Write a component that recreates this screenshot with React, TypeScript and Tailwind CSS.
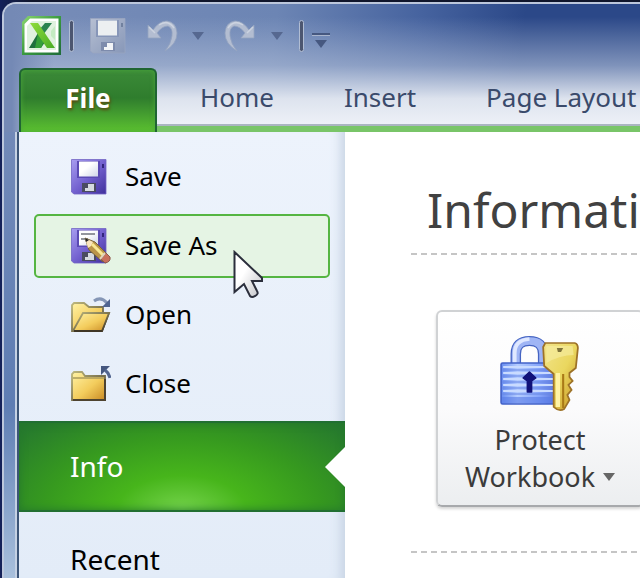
import React from "react";

function ExcelLogo() {
  return (
    <svg width="40" height="40" viewBox="0 0 40 40" aria-hidden="true">
      <defs>
        <linearGradient id="logoEdge" x1="0" y1="0" x2="1" y2="1">
          <stop offset="0" stopColor="#8bd670" />
          <stop offset="0.5" stopColor="#3a9a3f" />
          <stop offset="1" stopColor="#1f6b3a" />
        </linearGradient>
        <linearGradient id="logoX" x1="0" y1="0" x2="1" y2="1">
          <stop offset="0" stopColor="#8fdc3c" />
          <stop offset="1" stopColor="#4aac25" />
        </linearGradient>
      </defs>
      <path d="M7 0H40V39H1V6Z" fill="url(#logoEdge)" />
      <path d="M9 2.5H37.5V36.5H3.5V8Z" fill="#fff" />
      <path d="M11 5H35V34H6V10Z" fill="#e0f2df" />
      <path d="M31 7H24L18 14L22 19Z" fill="#2b8450" />
      <path d="M30 15L34 10V24L30 20Z" fill="#c4ebc2" />
      <path d="M17 17L24 26L20 32H8Z" fill="#1f703e" />
      <path d="M17 17L23 25L20 32H14Z" fill="#35a03a" />
      <path d="M9 7H17L34 32H26Z" fill="url(#logoX)" />
    </svg>
  );
}

function Floppy({ muted = false, pencil = false }: { muted?: boolean; pencil?: boolean }) {
  const body = muted ? "url(#floppyGrey)" : "url(#floppyBlue)";
  return (
    <svg width="40" height="36" viewBox="0 0 40 36" aria-hidden="true">
      <defs>
        <linearGradient id="floppyGrey" x1="0" y1="0" x2="1" y2="1">
          <stop offset="0" stopColor="#b6bfd2" />
          <stop offset="1" stopColor="#8797b8" />
        </linearGradient>
        <linearGradient id="floppyBlue" x1="0" y1="0" x2="1" y2="1">
          <stop offset="0" stopColor="#a79df0" />
          <stop offset="0.5" stopColor="#7462d0" />
          <stop offset="1" stopColor="#40309c" />
        </linearGradient>
        <linearGradient id="floppyLabel" x1="0" y1="0" x2="1" y2="1">
          <stop offset="0.4" stopColor="#fff" />
          <stop offset="1" stopColor="#cfd6e8" />
        </linearGradient>
      </defs>
      <path d="M0.500 0.500H35V35H3L0.500 33Z" fill={body} stroke={muted ? "#9aa6c0" : "#7466c4"} strokeWidth="0.8" />
      <path d="M6 2H29V19H6Z" fill={muted ? "#8796b8" : "#5a4ab4"} />
      <path d="M8 2.500H27V17.500H8Z" fill={muted ? "#eceff1" : "url(#floppyLabel)"} />
      <path d="M31 5H33V9H31Z" fill={muted ? "#71819f" : "#33267d"} />
      <path d="M11 24H25V33H11Z" fill={muted ? "#7d8bac" : "#4a4b60"} />
      <path d="M17 25H23V32H14V29H17Z" fill={muted ? "#f2f4f7" : "#d6dae0"} />
      {pencil && (
        <g>
          <path d="M10 6H24M10 11H17" stroke="#70747e" strokeWidth="1.6" />
          <path d="M14 10L24 14L38 28L32 34L18 22Z" fill="#ba9448" stroke="#77643b" />
          <path d="M14 10L17 20L20 18L22 14Z" fill="#fae6bd" />
          <path d="M14 10L15 14L18 12Z" fill="#222" />
          <path d="M21 16L34 29" stroke="#f8e891" strokeWidth="3" />
          <path d="M35 25L39 29Q40 34 34 35L30 31Z" fill="#c8705c" stroke="#8c584b" />
          <path d="M34 25L29 31" stroke="#e1d3bc" strokeWidth="2" />
        </g>
      )}
    </svg>
  );
}

function UndoIcon({ flip = false }: { flip?: boolean }) {
  return (
    <svg width="31" height="33" viewBox="0 0 31 33" aria-hidden="true" className={flip ? "-scale-x-100" : ""}>
      <path
        d="M1 5V18H14L10 13Q15 6 21 6Q26 8 25 16Q24 24 18 31Q30 24 30 13Q29 2 20 1Q12 1 6 10Z"
        fill="#b3bdd1"
        stroke="#96a4c0"
        strokeWidth="0.8"
      />
      <path d="M2 7L8 13M12 5Q21 -1 27 8" stroke="#ccd3e0" strokeWidth="1.5" fill="none" />
    </svg>
  );
}

function Caret({ className = "" }: { className?: string }) {
  return (
    <svg width="12" height="8" viewBox="0 0 12 8" className={className} aria-hidden="true">
      <path d="M0 0H12L6 8Z" fill="currentColor" />
    </svg>
  );
}

function Divider() {
  return <span className="h-8 w-[5px] rounded-sm border border-[#b1bdd3] bg-[#4c5670]" />;
}

function FolderDefs() {
  return (
    <defs>
      <linearGradient id="folder" x1="0" y1="0" x2="1" y2="1">
        <stop offset="0" stopColor="#fff3a6" />
        <stop offset="0.55" stopColor="#f3cc5c" />
        <stop offset="1" stopColor="#c98a24" />
      </linearGradient>
      <linearGradient id="folderEdge" x1="0" y1="0" x2="1" y2="1">
        <stop offset="0" stopColor="#bdb77d" />
        <stop offset="1" stopColor="#3d3324" />
      </linearGradient>
    </defs>
  );
}

function OpenIcon() {
  return (
    <svg width="40" height="36" viewBox="0 0 40 36" aria-hidden="true">
      <FolderDefs />
      <path d="M1 34V8L3 6H13L18 10H32V16H38L31 34Z" fill="url(#folder)" stroke="url(#folderEdge)" strokeWidth="1.8" />
      <path d="M3 32L12 16H38L31 34H2Z" fill="url(#folder)" stroke="url(#folderEdge)" strokeWidth="1.8" />
      <path d="M3 34H31" stroke="#3f3625" strokeWidth="2" />
      <path d="M23 4Q30 -1 36 6" fill="none" stroke="#8596b6" strokeWidth="3" />
      <path d="M39 2V10H31Z" fill="#506591" />
    </svg>
  );
}

function CloseIcon() {
  return (
    <svg width="40" height="36" viewBox="0 0 40 36" aria-hidden="true">
      <path d="M1 34V8L3 6H11L14 10H34V34Z" fill="url(#folder)" stroke="url(#folderEdge)" strokeWidth="1.8" />
      <path d="M2 12H33" stroke="#aa9b5b" strokeWidth="1.5" />
      <path d="M34 13V34H2" fill="none" stroke="#4e4330" strokeWidth="2" />
      <path d="M30 0H39L30 9Z" fill="#45577f" />
      <path d="M34 4Q38 7 39 12" fill="none" stroke="#53668f" strokeWidth="3" />
    </svg>
  );
}

function LockIcon() {
  return (
    <svg width="80" height="78" viewBox="0 0 76 78" preserveAspectRatio="none" aria-hidden="true">
      <defs>
        <linearGradient id="lockBody" x1="0" y1="0" x2="1" y2="0">
          <stop offset="0" stopColor="#668cf0" />
          <stop offset="0.3" stopColor="#b5cdff" />
          <stop offset="0.7" stopColor="#85a4fa" />
          <stop offset="1" stopColor="#5874dc" />
        </linearGradient>
        <linearGradient id="keyFill" x1="0" y1="0" x2="1" y2="1">
          <stop offset="0" stopColor="#f2e48b" />
          <stop offset="0.5" stopColor="#ead75f" />
          <stop offset="1" stopColor="#c5901d" />
        </linearGradient>
      </defs>
      <path d="M15 30V20Q15 7 28 7Q41 7 41 20V30" fill="none" stroke="#4564c2" strokeWidth="10" />
      <path d="M15 30V20Q15 7 28 7Q41 7 41 20V30" fill="none" stroke="#9fb5f5" strokeWidth="7.500" />
      <path d="M14 29V19Q14 6 28 5" fill="none" stroke="#dfe8ff" strokeWidth="3.500" />
      <rect x="1" y="29" width="52" height="41" rx="1.500" fill="url(#lockBody)" stroke="#4261c8" strokeWidth="1.500" />
      <path d="M3 33H51M3 39H51M3 45H51M3 51H51M3 57H51" stroke="#c9dbff" strokeWidth="2" />
      <path d="M2 36H52M2 42H52M2 48H52M2 54H52M2 60H52" stroke="#6785e4" strokeWidth="1" />
      <path d="M2 63H52V69H2Z" fill="#587be6" opacity="0.6" />
      <path d="M28 38L34 44L30 47V58H26V47L22 44Z" fill="#11127a" stroke="#11127a" strokeWidth="1.500" strokeLinejoin="round" />
      <path
        d="M43 9H71Q74 10 74 14L72 34L66 39V43L69 47L65 51L68 56L64 61L66 66L61 75Q56 78 51 73V40L42 32L41 13Z"
        fill="url(#keyFill)"
        stroke="#9d7228"
        strokeWidth="1.700"
      />
      <path d="M44 12H69L70 21Q57 21 44 29Z" fill="#f6ec9f" opacity="0.65" />
      <path d="M55 39V73" stroke="#fff3a5" strokeWidth="4" />
      <path d="M60 40V74" stroke="#a97917" strokeWidth="2" />
      <path d="M54 14H60L58 18H55Z" fill="#80743a" />
    </svg>
  );
}

function Pointer() {
  return (
    <svg width="32" height="50" viewBox="0 0 32 50" className="absolute left-[197px] top-[34px]" aria-hidden="true">
      <defs>
        <linearGradient id="pointer" x1="0" y1="0" x2="1" y2="1">
          <stop offset="0.4" stopColor="#fff" />
          <stop offset="1" stopColor="#bfc0c5" />
        </linearGradient>
      </defs>
      <path
        d="M1.500 2V42L11 34L17 46Q19 48 22 46Q26 44 24 41L19 31H29V28Z"
        fill="url(#pointer)"
        stroke="#2b2e3c"
        strokeWidth="2"
      />
    </svg>
  );
}

const tabs = ["Home", "Insert", "Page Layout"];

const commands = [
  { label: "Save", icon: <Floppy /> },
  { label: "Save As", icon: <Floppy pencil />, active: true },
  { label: "Open", icon: <OpenIcon /> },
  { label: "Close", icon: <CloseIcon /> },
];

function QuickAccess() {
  return (
    <div className="flex h-16 items-center pl-[17px]">
      <ExcelLogo />
      <div className="ml-2 flex items-center">
        <Divider />
        <button aria-label="Save workbook" className="ml-4">
          <Floppy muted />
        </button>
        <button aria-label="Undo" className="ml-[17px]">
          <UndoIcon />
        </button>
        <button aria-label="Undo history" className="ml-[14px]">
          <Caret className="text-[#566890]" />
        </button>
        <button aria-label="Redo" className="ml-5">
          <UndoIcon flip />
        </button>
        <button aria-label="Redo history" className="mx-4">
          <Caret className="text-[#566890]" />
        </button>
        <Divider />
        <button aria-label="Customize toolbar" className="ml-2 mt-2 flex flex-col items-center gap-1 text-[#465880]">
          <span className="h-[3px] w-[18px] border-b border-[#a9b5cd] bg-[#465880]" />
          <Caret />
        </button>
      </div>
    </div>
  );
}

function Ribbon() {
  return (
    <nav className="flex h-16 items-stretch whitespace-nowrap pl-[15px] text-[26px] text-[#3a4a6b]">
      <button className="z-10 w-[138px] shrink-0 rounded-t-md border-2 border-b-0 border-[#1f6532] bg-linear-to-b from-[#3b8a38] via-[#2f7d2d] via-45% to-[#5cc22f] pb-[6px] font-bold text-white shadow-[inset_0_0_5px_#4ba63a] [text-shadow:1px_2px_3px_#5a4a10]">
        File
      </button>
      <div className="flex grow border-b-6 border-[#79c568] pl-2 shadow-[inset_0_-2px_0_#aab5c0]">
        {tabs.map((t) => (
          <button key={t} className="shrink-0 px-[35px]">
            {t}
          </button>
        ))}
      </div>
    </nav>
  );
}

function Sidebar() {
  return (
    <aside className="w-[326px] shrink-0 bg-linear-to-b from-[#edf3fc] to-[#e3ecf8] pt-[13px] text-black shadow-[inset_-14px_0_12px_-10px_#c6d3e3]">
      <div className="flex flex-col gap-[5px] px-[15px] pb-[5px]">
        {commands.map((c) => (
          <button
            key={c.label}
            className={
              c.active
                ? "relative flex h-16 items-center rounded-[5px] border-2 border-[#55b542] bg-[#e5f4e4] pl-[35px] text-[26px]"
                : "flex h-16 items-center rounded-[5px] border-2 border-transparent pl-[35px] text-[26px]"
            }
          >
            {c.icon}
            <span className="ml-[14px] pb-[2px]">{c.label}</span>
            {c.active && <Pointer />}
          </button>
        ))}
      </div>
      <button className="relative flex h-[91px] w-full items-center border-y-2 border-[#216f32] bg-[radial-gradient(ellipse_at_50%_100%,#74d34b_0%,#47b51b_28%,#36991f_60%,#247530_100%)] pb-[2px] pl-[51px] text-[28px] text-white shadow-[inset_0_0_8px_#24782b]">
        Info
        <svg width="20" height="40" viewBox="0 0 20 40" className="absolute right-0 top-[24px]" aria-hidden="true">
          <path d="M20 0V40L0 20Z" fill="#fff" />
        </svg>
      </button>
      <button className="mt-4 flex h-16 w-full items-center pb-[2px] pl-[51px] text-[28px]">Recent</button>
    </aside>
  );
}

function DashedRule() {
  return <div className="h-[2px] bg-[repeating-linear-gradient(to_right,#c5c5c5_0_6px,transparent_6px_10px)]" />;
}

function InfoPane() {
  return (
    <main className="min-w-0 grow overflow-hidden bg-white pl-[66px] pt-11">
      <h1 className="pl-4 text-[48px] leading-[68px] text-[#414141]">Information</h1>
      <div className="mt-[9px]">
        <DashedRule />
      </div>
      <button className="my-[55px] ml-[25px] flex h-[197px] w-[208px] flex-col items-center rounded-md border-2 border-[#d0d2d4] border-b-[#a7a9ac] bg-linear-to-b from-white via-[#fbfbfc] to-[#eceef0] pt-[22px] text-[27px] leading-[37px] text-[#3b3b3b] shadow-[0_2px_3px_#d5d5d5]">
        <LockIcon />
        <span className="mt-[9px]">Protect</span>
        <span className="flex items-center gap-2">
          Workbook
          <Caret className="text-[#666]" />
        </span>
      </button>
      <div className="-mt-[11px]">
        <DashedRule />
      </div>
    </main>
  );
}

export default function App() {
  return (
    <div className="h-screen overflow-hidden bg-linear-to-r from-[#14215a] to-[#10162c] to-5% pl-[2px] pt-[2px] font-['Noto_Sans','Open_Sans',sans-serif]">
      <div className="flex h-full flex-col overflow-hidden rounded-tl-[14px] border-l-2 border-t-2 border-[#bcc7dc] bg-linear-to-b from-[#7b8fba] via-[#5e7db3] via-70% to-[#a9c0dc]">
        <header className="bg-[linear-gradient(to_right,#7489b5_8px,transparent_50px),linear-gradient(to_bottom,transparent_10%,#a9b8d4aa_48%,#dde3ee_74%,#eff2f8_96%),linear-gradient(98deg,#788db8_0%,#6c85b4_42%,#46639f_64%,#2b4888_80%)]">
          <QuickAccess />
          <Ribbon />
        </header>
        <div className="ml-[11px] flex min-h-0 grow border-l-2 border-[#c5d1e3]">
          <div className="flex min-w-0 grow border-l-2 border-[#3c5578]">
            <Sidebar />
            <InfoPane />
          </div>
        </div>
      </div>
    </div>
  );
}
